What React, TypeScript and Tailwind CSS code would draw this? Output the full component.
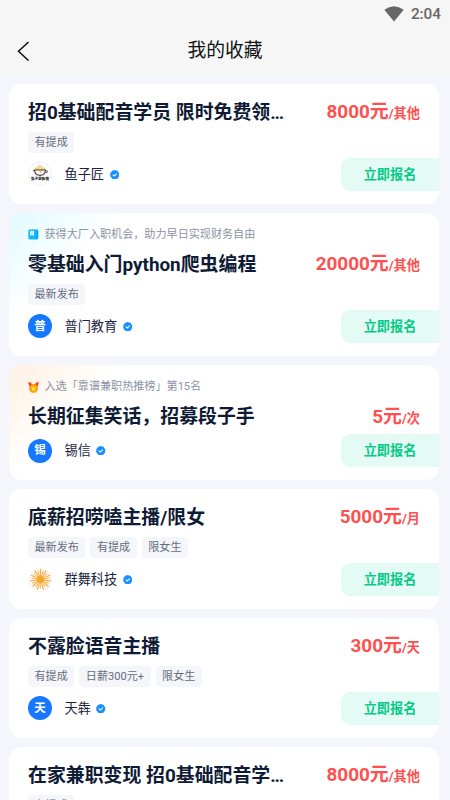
import React from "react";

type Job = {
  title: string;
  cut?: boolean;
  price: string;
  unit: string;
  tags: string[];
  company: string;
  avatar: "bowl" | "sun" | string;
  promo?: { kind: "blue" | "medal"; text: string };
};

const jobs: Job[] = [
  { title: "招0基础配音学员 限时免费领", cut: true, price: "8000元", unit: "/其他", tags: ["有提成"], company: "鱼子匠", avatar: "bowl" },
  {
    title: "零基础入门python爬虫编程", price: "20000元", unit: "/其他", tags: ["最新发布"], company: "普门教育", avatar: "普",
    promo: { kind: "blue", text: "获得大厂入职机会，助力早日实现财务自由" },
  },
  {
    title: "长期征集笑话，招募段子手", price: "5元", unit: "/次", tags: [], company: "锡信", avatar: "锡",
    promo: { kind: "medal", text: "入选「靠谱兼职热推榜」第15名" },
  },
  { title: "底薪招唠嗑主播/限女", price: "5000元", unit: "/月", tags: ["最新发布", "有提成", "限女生"], company: "群舞科技", avatar: "sun" },
  { title: "不露脸语音主播", price: "300元", unit: "/天", tags: ["有提成", "日薪300元+", "限女生"], company: "天犇", avatar: "天" },
  { title: "在家兼职变现 招0基础配音学", cut: true, price: "8000元", unit: "/其他", tags: ["有提成"], company: "鱼子匠", avatar: "bowl" },
];

function Verified() {
  return (
    <svg className="ml-[5.500px] size-[9.500px] shrink-0" viewBox="0 0 18 18">
      <path d="M9 0l2.400 1 2.800.4 1.200 2.400L17.600 6 17.400 9l.2 3-2.200 2.200-1.200 2.400-2.800.4L9 18l-2.400-1-2.800-.4-1.200-2.400L.4 12 .6 9 .4 6l2.200-2.200 1.200-2.400L6.600 1z" fill="#1890ff" />
      <path d="M5.300 8.800l2.800 2.800 4.800-4.900" fill="none" stroke="#fff" strokeWidth="1.900" />
    </svg>
  );
}

function Bowl() {
  return (
    <div className="flex size-6 shrink-0 flex-col items-center rounded-full border border-[#f1f1f4] bg-white">
      <svg className="mt-[2px] h-[11px] w-[16px] shrink-0" viewBox="0 0 16 11">
        <path d="M2.500 5C2.500 2.500 5 2.500 5.500 1.500 7-.2 9-.2 10.500 1.500c.5 1 3 1 3 3.500z" fill="#e9c45c" />
        <path d="M4 4l2-2 2 2 2-2 2 2M7 1.500h2" stroke="#fff" strokeWidth=".7" fill="none" />
        <path d="M2 5h12M2.500 5c.3 3.400 2.300 5.400 5.500 5.400S13.200 8.400 13.500 5" fill="none" stroke="#54443a" strokeWidth="1.200" />
        <path d="M2.300 5.500L.6 6M13.600 5.800h1.700v1.600h-2" fill="none" stroke="#54443a" strokeWidth=".8" />
        <circle cx="8.500" cy="6.700" r="1" fill="#e5b63c" />
      </svg>
      <span className="mt-px origin-top scale-[0.45] text-[8px] leading-[10px] font-black whitespace-nowrap text-[#222]">鱼子匠配音</span>
    </div>
  );
}

const rays = Array.from({ length: 22 }, (_, i) => i);

function Sun() {
  return (
    <div className="flex size-6 shrink-0 items-center justify-center rounded-full border border-[#f1f1f4] bg-white">
      <svg className="size-[21px] shrink-0" viewBox="-10.500 -10.500 21 21">
        {rays.map((i) => (
          <path
            key={i}
            d={i % 2 ? "M0 -5.400V-8.600" : "M0 -5.400V-10"}
            transform={`rotate(${(i * 360) / 22})`}
            stroke={i % 2 ? "#f9c06a" : "#f5ac4c"}
            strokeWidth="1.300"
            strokeLinecap="round"
          />
        ))}
        <circle r="4.400" fill="#fba52d" />
        <circle r="1.900" fill="none" stroke="#f7bf45" strokeWidth=".6" />
        <circle r="1" fill="#f0901f" />
      </svg>
    </div>
  );
}

function Avatar({ kind }: { kind: string }) {
  if (kind === "bowl") return <Bowl />;
  if (kind === "sun") return <Sun />;
  return (
    <div className="flex size-6 shrink-0 items-center justify-center rounded-full bg-[#1677ff] pt-px text-[11.5px] leading-none font-bold text-white">
      {kind}
    </div>
  );
}

function PromoIcon({ kind }: { kind: "blue" | "medal" }) {
  if (kind === "blue")
    return (
      <svg className="mt-[2px] size-[11px] shrink-0" viewBox="0 0 11 11">
        <defs>
          <linearGradient id="badgeBlue" x1="0" x2="1">
            <stop offset="0" stopColor="#16b9f7" />
            <stop offset=".7" stopColor="#13b8fa" />
            <stop offset="1" stopColor="#0a98ef" />
          </linearGradient>
        </defs>
        <path d="M.3 1.800Q.3.600 1.500.6H10Q9 1.200 10.300 2v6.800q0 1.600-1.600 1.600H1.600Q.3 10.400.3 9z" fill="url(#badgeBlue)" />
        <path d="M2 2h4v5L4 5.800 2 7z" fill="#e7faff" />
        <path d="M2.600 3.200h2.800M2.600 4.500h2.800" stroke="#6fd4fa" strokeWidth=".5" />
      </svg>
    );
  return (
    <svg className="mt-[2px] size-[11px] shrink-0" viewBox="0 0 11 11">
      <path d="M0 .2L2.800.6 5.500 2.300 8.200.6 11 .2 9.600 4.800H1.400z" fill="#f04a23" />
      <path d="M2.800.8l2.700 2.700L8.200.8z" fill="#fff4ea" />
      <circle cx="5.500" cy="6.500" r="4.400" fill="#ff9c12" />
      <path d="M5.500 3.800l.8 1.700 1.900.2-1.400 1.300.4 1.900-1.700-.9-1.700.9.4-1.900-1.400-1.300 1.900-.2z" fill="#ffea28" />
    </svg>
  );
}

function JobCard({ job }: { job: Job }) {
  const tint =
    job.promo?.kind === "blue"
      ? "bg-[linear-gradient(135deg,#e0faff_0px,#ffffff_82px)]"
      : job.promo?.kind === "medal"
        ? "bg-[linear-gradient(135deg,#fff0e2_0px,#ffffff_82px)]"
        : "bg-white";
  return (
    <article className={`shrink-0 overflow-hidden rounded-[13px] pt-[14px] pb-[13px] pl-[19px] ${tint}`}>
      {job.promo && (
        <div className="mb-[9.300px] flex h-[14px] items-center text-[11.100px] text-[#8c93a3]">
          <PromoIcon kind={job.promo.kind} />
          <span className="ml-[5.500px] pt-[2px] whitespace-nowrap">{job.promo.text}</span>
        </div>
      )}
      <div className="flex h-[27px] items-start justify-between pr-[19px] whitespace-nowrap">
        <h2 className="pt-[1px] text-[18.900px] leading-[27px] font-bold text-[#0f1b35]">
          {job.title}
          {job.cut && <span className="tracking-[-1.200px]">...</span>}
        </h2>
        <p className="pt-[0.200px] text-[18.900px] leading-[27px] font-bold text-[#ff5050]">
          {job.price}
          <span className="text-[13.200px]">{job.unit}</span>
        </p>
      </div>
      {job.tags.length > 0 && (
        <div className="mt-[7px] flex gap-[5px]">
          {job.tags.map((t) => (
            <span key={t} className="flex h-[21px] items-center rounded-[4px] bg-[#f5f6fa] px-[6.500px] pt-px text-[11.100px] whitespace-nowrap text-[#646d7e]">
              {t}
            </span>
          ))}
        </div>
      )}
      <div className="mt-[4.500px] flex h-[33.500px] items-center">
        <Avatar kind={job.avatar} />
        <span className="ml-[12.500px] pt-px text-[13.200px] whitespace-nowrap text-[#18233c]">{job.company}</span>
        <Verified />
        <button className="ml-auto h-full w-[98px] rounded-l-[9px] bg-[#e3fbf4] pt-[1.500px] text-[13.200px] font-bold text-[#08ca87]">立即报名</button>
      </div>
    </article>
  );
}

export default function App() {
  return (
    <div className="flex h-[800px] w-[450px] flex-col overflow-hidden bg-[#f5f6fb] font-[Roboto,'Noto_Sans_CJK_SC',sans-serif]">
      <header className="h-[75px] shrink-0 bg-[#f6f6f6]">
        <div className="flex h-[27px] items-center justify-end pt-[2px] pr-[9px]">
          <svg className="mr-[7px] mb-[2px] h-[16px] w-[20px]" viewBox="0 0 20 16">
            <path d="M.3 3.800Q10-3.200 19.700 3.800L10 15.500z" fill="#666" />
          </svg>
          <span className="text-[15.300px] font-medium text-[#666]">2:04</span>
        </div>
        <div className="grid h-[48px] grid-cols-[60px_1fr_60px] items-center">
          <svg className="mb-px ml-[17px] h-[20px] w-[13px]" viewBox="0 0 13 20">
            <path d="M11.500 1L1.500 10.200l10 9.300" fill="none" stroke="#111" strokeWidth="1.500" />
          </svg>
          <h1 className="pt-px text-center text-[18.800px] text-[#111]">我的收藏</h1>
        </div>
      </header>
      <main className="flex flex-col gap-[8.900px] pt-[9px] pr-[11px] pl-[9px]">
        {jobs.map((j, i) => (
          <JobCard key={i} job={j} />
        ))}
      </main>
    </div>
  );
}
